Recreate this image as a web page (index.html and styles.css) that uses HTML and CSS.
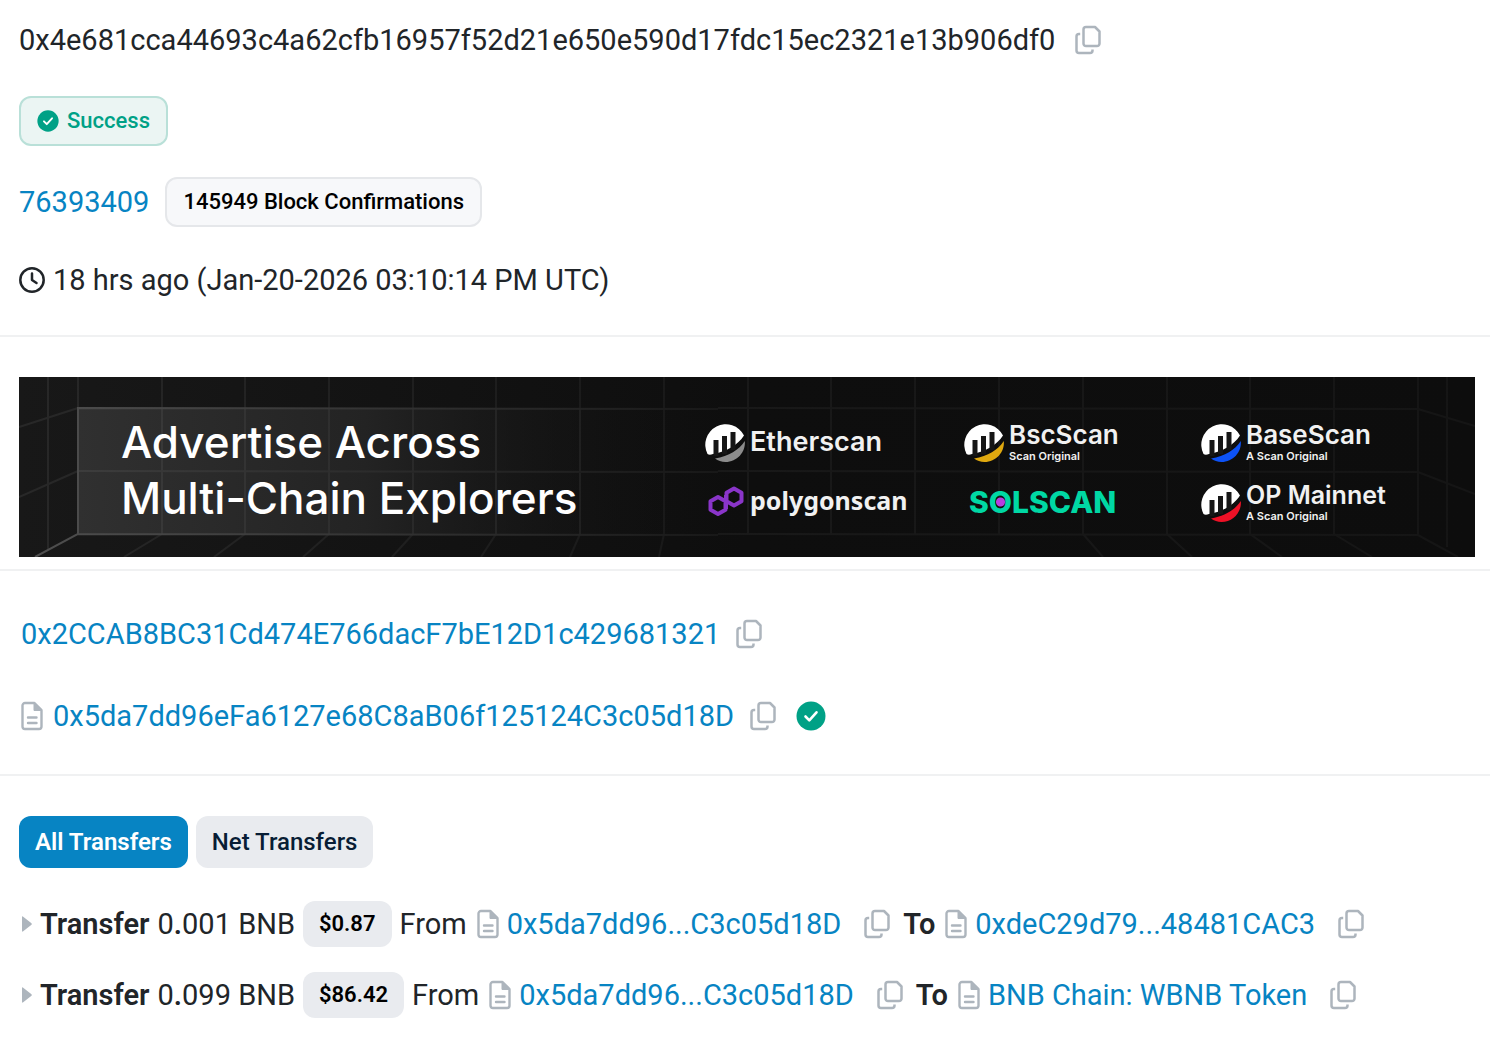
FILE: index.html
```
<!DOCTYPE html>
<html lang="en">
<head>
  <meta charset="UTF-8" />
  <meta name="viewport" content="width=device-width, initial-scale=1" />
  <title>BNB Smart Chain Transaction</title>
  <link rel="stylesheet" href="styles.css">
</head>
<body>

  <!-- shared icons -->
  <svg class="sprite" aria-hidden="true">
    <symbol id="i-copy" viewBox="0 0 26 30">
      <path d="M11 2h9l4.500 4.500v12a2.500 2.500 0 0 1-2.500 2.500H11a2.500 2.500 0 0 1-2.500-2.500v-14A2.500 2.500 0 0 1 11 2z M5.200 9H4a2.500 2.500 0 0 0-2.500 2.500v14A2.500 2.500 0 0 0 4 28h11a2.500 2.500 0 0 0 2.500-2.500V24.500" fill="none" stroke="currentColor" stroke-width="2.500" stroke-linejoin="round"/>
    </symbol>
    <symbol id="i-file" viewBox="0 0 22 30">
      <path d="M4 2h9.500l7 7v16.500a2.500 2.500 0 0 1-2.500 2.500H4a2.500 2.500 0 0 1-2.500-2.500v-21A2.500 2.500 0 0 1 4 2z" fill="none" stroke="currentColor" stroke-width="2.400" stroke-linejoin="round"/>
      <path d="M13 2v7.500h7.500z" fill="currentColor" stroke="currentColor"/>
      <path d="M7 16.500h8.500M7 22h8.500" stroke="currentColor" stroke-width="2.400" stroke-linecap="round"/>
    </symbol>
    <symbol id="i-check" viewBox="0 0 30 30">
      <circle cx="15" cy="15" r="14.500" fill="currentColor"/>
      <path d="M9.500 15.500l3.800 3.800 7.200-8" fill="none" stroke="#fff" stroke-width="2.600" stroke-linecap="round" stroke-linejoin="round"/>
    </symbol>
    <symbol id="i-scan" viewBox="0 0 42 42">
      <path d="M3.500 33A20 20 0 1 1 40 14.500C34 24 22 31 9 33Q5.500 34.500 3.500 33z" fill="#fff"/>
      <path d="M12 35V19M20.500 33V15M29 29V11" stroke="#161616" stroke-width="5"/>
      <path d="M11 37.500C25 35 35 29 40.800 20C42 31 33 41 21.500 41C17.500 41 14 39.800 11 37.500z" fill="currentColor"/>
    </symbol>
  </svg>

  <section class="section overview">
    <div class="row">
      <span>0x4e681cca44693c4a62cfb16957f52d21e650e590d17fdc15ec2321e13b906df0</span>
      <button class="copy" aria-label="Copy transaction hash"><svg><use href="#i-copy"/></svg></button>
    </div>
    <div class="row">
      <span class="badge badge-success"><svg><use href="#i-check"/></svg>Success</span>
    </div>
    <div class="row">
      <a href="#">76393409</a>
      <span class="badge badge-block">145949 Block Confirmations</span>
    </div>
    <div class="row time">
      <svg class="clock" viewBox="0 0 26 26"><circle cx="13" cy="13" r="11.700"/><path d="M13 6.500V13l4.500 3"/></svg>
      <span>18 hrs ago (Jan-20-2026 03:10:14 PM UTC)</span>
    </div>
  </section>

  <section class="section ad">
    <a class="banner" href="#">
      <svg class="banner-bg" viewBox="0 0 1456 180" preserveAspectRatio="none" aria-hidden="true">
        <defs>
          <linearGradient id="wall"><stop offset="0" stop-color="#181818"/><stop offset=".5" stop-color="#0e0e0e"/><stop offset="1" stop-color="#0d0d0d"/></linearGradient>
          <linearGradient id="panel"><stop offset="0" stop-color="#303030"/><stop offset=".45" stop-color="#232323"/><stop offset="1" stop-color="#0e0e0e" stop-opacity="0"/></linearGradient>
          <linearGradient id="line" gradientUnits="userSpaceOnUse" x1="0" y1="0" x2="1456" y2="0"><stop offset="0" stop-color="#282828"/><stop offset=".45" stop-color="#191919"/><stop offset="1" stop-color="#151515"/></linearGradient>
          <linearGradient id="rib" gradientUnits="userSpaceOnUse" x1="0" y1="0" x2="700" y2="0"><stop offset="0" stop-color="#404040"/><stop offset="1" stop-color="#181818"/></linearGradient>
          <linearGradient id="edge" gradientUnits="userSpaceOnUse" x1="0" y1="0" x2="700" y2="0"><stop offset="0" stop-color="#505050"/><stop offset="1" stop-color="#181818"/></linearGradient>
        </defs>
        <rect width="1456" height="180" fill="url(#wall)"/>
        <rect x="59" y="31" width="640" height="126" fill="url(#panel)"/>
        <g fill="none" stroke="url(#line)" stroke-width="2">
          <path d="M29 0V173M59 0V31M143 0V31M226 0V31M310 0V31M394 0V31M477 0V31M561 0V31M645 0V157M729 0V157M812 0V157M896 0V157M980 0V157M1064 0V157M1148 0V157M1231 0V157M1315 0V157M1399 0V157M1428 0V170"/>
          <path d="M0 50L59 31M699 31L1399 32L1456 49M0 120L59 94M699 94L1399 95L1456 117M699 157L1399 158L1439 180"/>
          <path d="M143 157L105 180M226 157L195 180M310 157L284 180M394 157L373 180M477 157L462 180M561 157L551 180M645 157L640 180M1064 157L1084 180M1148 157L1173 180M1231 157L1263 180M1315 157L1353 180"/>
        </g>
        <path d="M143 31V157M226 31V157M310 31V157M394 31V157M477 31V157M561 31V157M59 94L699 95" fill="none" stroke="url(#rib)" stroke-width="2"/>
        <path d="M16 180L59 157V31L699 32M59 157L699 158" fill="none" stroke="url(#edge)" stroke-width="2"/>
      </svg>
      <span class="headline">Advertise Across<br>Multi-Chain Explorers</span>
      <span class="brand etherscan"><svg><use href="#i-scan"/></svg><span class="name">Etherscan</span></span>
      <span class="brand bscscan"><svg><use href="#i-scan"/></svg><span class="name">BscScan<small>Scan Original</small></span></span>
      <span class="brand basescan"><svg><use href="#i-scan"/></svg><span class="name">BaseScan<small>A Scan Original</small></span></span>
      <span class="brand polygonscan">
        <svg viewBox="0 0 42 42"><g fill="none" stroke="#8a35c9" stroke-width="4" stroke-linejoin="round"><path d="M14 16l7.500 4.200v8.600L14 33l-7.500-4.200v-8.600z"/><path d="M30 7.500l7.500 4.200v8.600L30 24.500l-7.500-4.200v-8.600z"/><path d="M22 14v14"/></g></svg>
        <span class="name">polygonscan</span>
      </span>
      <span class="brand solscan"><span class="name">S<span class="ring">O</span>LSCAN</span></span>
      <span class="brand opmainnet"><svg><use href="#i-scan"/></svg><span class="name">OP Mainnet<small>A Scan Original</small></span></span>
    </a>
  </section>

  <section class="section parties">
    <div class="row">
      <a href="#">0x2CCAB8BC31Cd474E766dacF7bE12D1c429681321</a>
      <button class="copy" aria-label="Copy sender address"><svg><use href="#i-copy"/></svg></button>
    </div>
    <div class="row">
      <svg class="file"><use href="#i-file"/></svg>
      <a href="#">0x5da7dd96eFa6127e68C8aB06f125124C3c05d18D</a>
      <button class="copy" aria-label="Copy contract address"><svg><use href="#i-copy"/></svg></button>
      <svg class="verified"><use href="#i-check"/></svg>
    </div>
  </section>

  <section class="section transfers">
    <div class="tabs">
      <button class="tab active">All Transfers</button>
      <button class="tab">Net Transfers</button>
    </div>
    <div class="transfer">
      <svg class="caret" viewBox="0 0 10 16"><path d="M0 1.500Q0-.5 1.500 1L9.500 7.200Q10 8 9.500 8.800L1.500 15Q0 16.500 0 14.500z"/></svg>
      <b>Transfer</b>
      <span>0<b>.</b>001 BNB</span>
      <span class="badge badge-price">$0.87</span>
      <span>From</span>
      <svg class="file"><use href="#i-file"/></svg>
      <a href="#">0x5da7dd96...C3c05d18D</a>
      <button class="copy" aria-label="Copy from address"><svg><use href="#i-copy"/></svg></button>
      <b class="to">To</b>
      <svg class="file"><use href="#i-file"/></svg>
      <a href="#">0xdeC29d79...48481CAC3</a>
      <button class="copy" aria-label="Copy to address"><svg><use href="#i-copy"/></svg></button>
    </div>
    <div class="transfer">
      <svg class="caret" viewBox="0 0 10 16"><path d="M0 1.500Q0-.5 1.500 1L9.500 7.200Q10 8 9.500 8.800L1.500 15Q0 16.500 0 14.500z"/></svg>
      <b>Transfer</b>
      <span>0<b>.</b>099 BNB</span>
      <span class="badge badge-price">$86.42</span>
      <span>From</span>
      <svg class="file"><use href="#i-file"/></svg>
      <a href="#">0x5da7dd96...C3c05d18D</a>
      <button class="copy" aria-label="Copy from address"><svg><use href="#i-copy"/></svg></button>
      <b class="to">To</b>
      <svg class="file"><use href="#i-file"/></svg>
      <a href="#">BNB Chain: WBNB Token</a>
      <button class="copy" aria-label="Copy to address"><svg><use href="#i-copy"/></svg></button>
    </div>
  </section>

</body>
</html>
```
FILE: styles.css
```
* { margin:0; padding:0; box-sizing:border-box; }
body { background:#fff; color:#212529; font-family:Roboto,"Liberation Sans",sans-serif; font-size:29px; line-height:44px; }
a { color:#0784c3; text-decoration:none; }
b { font-weight:600; }
button { font-family:inherit; border:none; background:none; cursor:pointer; }
svg { display:block; flex:none; }
.sprite { position:absolute; width:0; height:0; }

.section { border-bottom:2px solid #f0f1f2; white-space:nowrap; }
.overview { display:flex; flex-direction:column; gap:31px; padding:15px 19px 33px; }
.row { display:flex; align-items:center; min-height:50px; }
.time { min-height:44px; gap:8px; }
.clock { width:26px; height:26px; fill:none; stroke:#212529; stroke-width:2.5; stroke-linecap:round; stroke-linejoin:round; }

.copy { color:#adb5bd; margin-left:16px; }
.copy svg { width:26px; height:30px; }
.overview .copy { margin-left:20px; }
.file { width:22px; height:30px; color:#adb5bd; }
.verified { width:30px; height:30px; margin-left:20px; color:#00a186; }

.badge { display:inline-flex; align-items:center; font-size:22px; font-weight:500; border-radius:12px; }
.badge-success { height:50px; gap:8px; padding:0 16px; color:#00a186; background:#ebf5f3; border:2px solid #b9e0d8; }
.badge-success svg { width:22px; height:22px; }
.badge-block { height:50px; margin-left:16px; padding:0 16px; color:#000; background:#f7f8fa; border:2px solid #e5e7ea; }
.badge-price { height:46px; padding:0 16px; color:#000; background:#e9ebef; font-weight:600; }

/* ad banner */
.ad { padding:40px 15px 12px 19px; }
.banner { position:relative; display:grid; grid-template-columns:583fr 259fr 237fr 275fr; grid-template-rows:60px 60px; align-items:center; padding:35px 0 25px 102px; color:#f1f1f1; overflow:hidden; }
.banner-bg { position:absolute; inset:0; width:100%; height:100%; }
.headline { position:relative; grid-row:span 2; padding-bottom:4px; font-family:Inter,sans-serif; font-size:44px; font-weight:500; line-height:56px; color:#fff; }
.brand { position:relative; display:flex; align-items:center; gap:4px; }
.brand svg { width:42px; height:42px; }
.name { font-family:Inter,sans-serif; font-size:26px; font-weight:600; line-height:28px; }
.name small { display:block; font-size:11px; line-height:14px; }
.etherscan { color:#8c8c8c; }
.bscscan { color:#e0a90f; }
.basescan { color:#0d52f5; }
.opmainnet { color:#ee1126; }
.brand .name { color:#f1f1f1; }
.etherscan .name { font-size:27px; }
.polygonscan .name { padding-bottom:4px; font-family:"Noto Sans",sans-serif; font-size:25px; font-weight:700; }
.solscan { padding-left:6px; }
.solscan .name { color:#00d8a4; font-size:30px; font-weight:800; }
.opmainnet .name { font-size:25px; }
.ring { background:radial-gradient(circle,#b63fe0 4px,transparent 5px); }

.parties { display:flex; flex-direction:column; gap:32px; padding:38px 21px 33px; }
.parties .file { margin-right:10px; }

.transfers { padding:40px 19px 22px; border-bottom:none; }
.tabs { display:flex; gap:8px; margin-bottom:33px; }
.tab { height:52px; padding:0 16px; border-radius:12px; background:#e9ebef; color:#081d35; font-size:24px; font-weight:500; }
.tab.active { background:#0784c3; color:#fff; font-weight:600; }
.transfer { display:flex; align-items:center; gap:8px; min-height:46px; padding-left:3px; }
.transfer + .transfer { margin-top:25px; }
.caret { width:10px; height:16px; fill:#adb5bd; }
.to { margin-left:5px; }
.transfer .file { margin-left:2px; }
.transfer .copy { margin-left:15px; }
```
